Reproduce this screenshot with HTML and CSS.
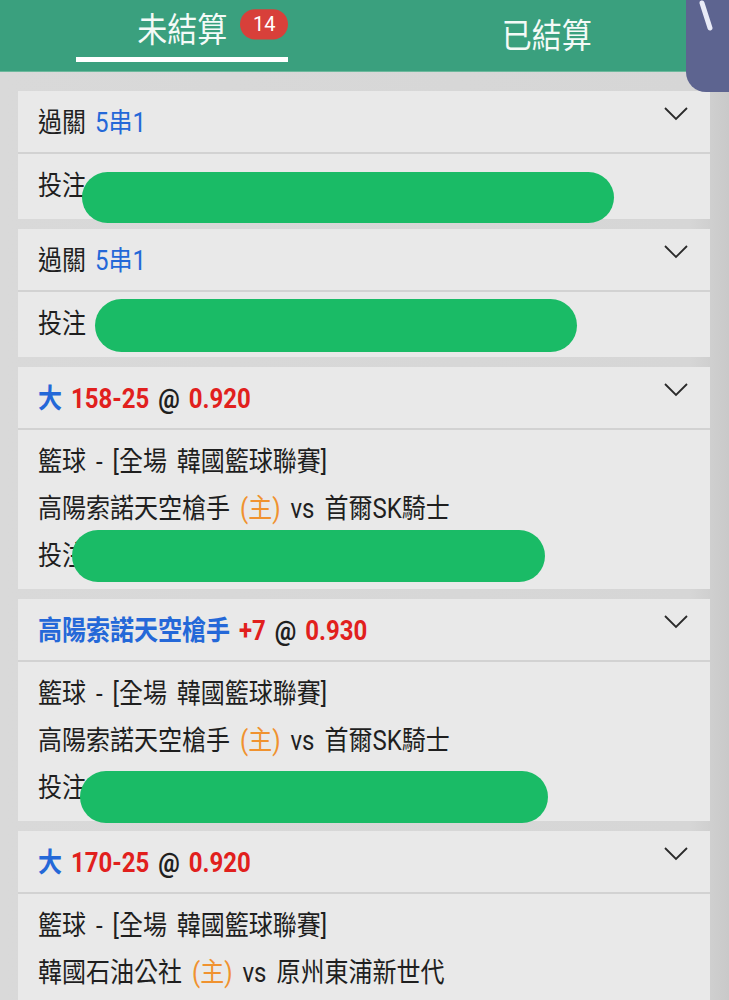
FILE: index.html
```html
<!DOCTYPE html>
<html lang="zh-Hant">
<head>
<meta charset="utf-8">
<title>注單</title>
<link rel="stylesheet" href="styles.css">
</head>
<body>
<header class="tabs">
  <div class="tab active">
    <span class="tab-label">未結算<span class="badge">14</span></span>
    <span class="underline"></span>
  </div>
  <div class="tab">
    <span class="tab-label">已結算</span>
  </div>
  <div class="float-btn">
    <svg width="43" height="92" viewBox="0 0 43 92"><path d="M16 3 L24 28" stroke="#e9ebf7" stroke-width="5" stroke-linecap="round" fill="none"/></svg>
  </div>
</header>

<main class="list">
  <section class="card">
    <div class="card-head">
      <span class="title"><span class="dark">過關</span> <span class="blue">5串1</span></span>
      <svg class="chev" width="24" height="14" viewBox="0 0 24 14"><path d="M1 1 L12 12 L23 1" stroke="#2a2a2a" stroke-width="1.8" fill="none"/></svg>
    </div>
    <div class="card-body">
      <div class="line bet"><span class="txt">投注</span><span class="mask" style="left:44px;top:9px;width:532px;height:51px"></span></div>
    </div>
  </section>

  <section class="card">
    <div class="card-head">
      <span class="title"><span class="dark">過關</span> <span class="blue">5串1</span></span>
      <svg class="chev" width="24" height="14" viewBox="0 0 24 14"><path d="M1 1 L12 12 L23 1" stroke="#2a2a2a" stroke-width="1.8" fill="none"/></svg>
    </div>
    <div class="card-body">
      <div class="line bet"><span class="txt">投注</span><span class="mask" style="left:57px;top:-2px;width:482px;height:53px"></span></div>
    </div>
  </section>

  <section class="card">
    <div class="card-head">
      <span class="title bold"><span class="blue">大</span> <span class="red">158-25</span> <span class="dark">@</span> <span class="red">0.920</span></span>
      <svg class="chev" width="24" height="14" viewBox="0 0 24 14"><path d="M1 1 L12 12 L23 1" stroke="#2a2a2a" stroke-width="1.8" fill="none"/></svg>
    </div>
    <div class="card-body">
      <div class="line"><span class="txt">籃球 - [全場 韓國籃球聯賽]</span></div>
      <div class="line"><span class="txt">高陽索諾天空槍手 <span class="orange">(主)</span> vs 首爾SK騎士</span></div>
      <div class="line bet"><span class="txt">投注</span><span class="mask" style="left:34px;top:-3px;width:473px;height:52px"></span></div>
    </div>
  </section>

  <section class="card">
    <div class="card-head">
      <span class="title bold"><span class="blue">高陽索諾天空槍手</span> <span class="red">+7</span> <span class="dark">@</span> <span class="red">0.930</span></span>
      <svg class="chev" width="24" height="14" viewBox="0 0 24 14"><path d="M1 1 L12 12 L23 1" stroke="#2a2a2a" stroke-width="1.8" fill="none"/></svg>
    </div>
    <div class="card-body">
      <div class="line"><span class="txt">籃球 - [全場 韓國籃球聯賽]</span></div>
      <div class="line"><span class="txt">高陽索諾天空槍手 <span class="orange">(主)</span> vs 首爾SK騎士</span></div>
      <div class="line bet"><span class="txt">投注</span><span class="mask" style="left:42px;top:6px;width:468px;height:52px"></span></div>
    </div>
  </section>

  <section class="card">
    <div class="card-head">
      <span class="title bold"><span class="blue">大</span> <span class="red">170-25</span> <span class="dark">@</span> <span class="red">0.920</span></span>
      <svg class="chev" width="24" height="14" viewBox="0 0 24 14"><path d="M1 1 L12 12 L23 1" stroke="#2a2a2a" stroke-width="1.8" fill="none"/></svg>
    </div>
    <div class="card-body">
      <div class="line"><span class="txt">籃球 - [全場 韓國籃球聯賽]</span></div>
      <div class="line"><span class="txt">韓國石油公社 <span class="orange">(主)</span> vs 原州東浦新世代</span></div>
    </div>
  </section>
</main>
</body>
</html>
```

FILE: styles.css
```css
* { box-sizing: border-box; }
html, body { margin: 0; padding: 0; }
body {
  width: 729px;
  height: 1000px;
  overflow: hidden;
  background: linear-gradient(to right, #d9d9d9 0, #d6d6d6 690px, #c9c9c9 729px);
  font-family: Roboto, "Noto Sans CJK TC", sans-serif;
  color: #1f1f1f;
}

.tabs {
  position: relative;
  height: 72px;
  display: flex;
  background: #3aa07e;
  border-bottom: 1px solid #6cb89c;
}
.tab {
  flex: 1 1 0;
  display: flex;
  flex-direction: column;
  align-items: center;
}
.tab-label {
  position: relative;
  margin-top: 13px;
  height: 36px;
  line-height: 36px;
  font-size: 30px;
  color: #f4faf7;
  display: inline-block;
  transform: scaleY(1.12);
}
.tab:not(.active) .tab-label { margin-top: 19px; }
.badge {
  position: absolute;
  left: 103px;
  top: -3px;
  width: 48px;
  height: 30px;
  border-radius: 15px;
  background: #d8403a;
  color: #fff;
  font-size: 20px;
  line-height: 30px;
  text-align: center;
  transform: scaleY(0.9);
}
.underline {
  margin-top: 8px;
  width: 212px;
  height: 5px;
  background: #ffffff;
}
.float-btn {
  position: absolute;
  right: 0;
  top: 0;
  width: 43px;
  height: 92px;
  background: #5d6490;
  border-bottom-left-radius: 20px;
  z-index: 5;
}
.float-btn svg { display: block; }

.list {
  display: flex;
  flex-direction: column;
  gap: 10px;
  padding: 19px 19px 0 18px;
}
.card {
  background: #e9e9e9;
}
.card-head {
  height: 63px;
  padding: 0 22px 0 20px;
  display: flex;
  align-items: center;
  justify-content: space-between;
  border-bottom: 2px solid #d2d2d2;
}
.title {
  font-size: 24px;
  display: inline-block;
  transform: scaleY(1.15);
  white-space: nowrap;
  word-spacing: 3px;
  margin-top: -4px;
}
.title.bold { font-weight: 700; }
.chev { display: block; margin-top: -16px; }
.blue { color: #2468d8; }
.red { color: #e1201d; }
.dark { color: #1f1f1f; }
.orange { color: #f0922f; }

.card-body {
  padding: 9px 20px;
}
.line {
  position: relative;
  height: 47px;
  line-height: 47px;
  font-size: 24px;
  white-space: nowrap;
}
.txt {
  display: inline-block;
  transform: scaleY(1.15);
  word-spacing: 4px;
}
.mask {
  position: absolute;
  background: #1abb66;
  border-radius: 27px;
  z-index: 2;
}
```
